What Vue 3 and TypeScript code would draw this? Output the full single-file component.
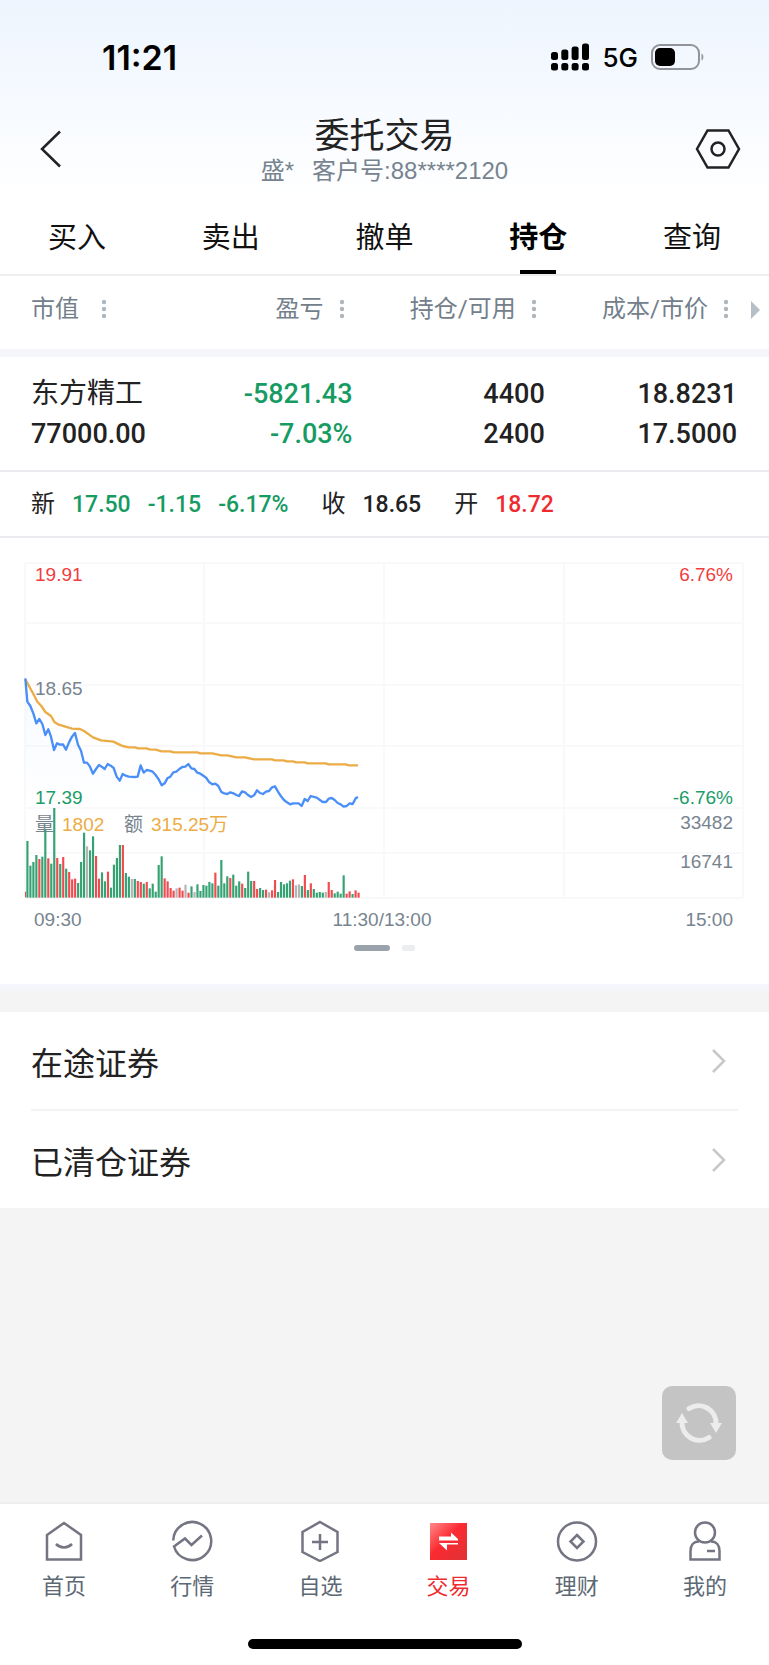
<script setup lang="ts">
interface Bar {
  x: number
  h: number
  kind: string
}

const tabs: string[] = ['买入', '卖出', '撤单', '持仓', '查询']
const activeTab = '持仓'
const columns: string[] = ['市值', '盈亏', '持仓/可用', '成本/市价']
const links: string[] = ['在途证券', '已清仓证券']

const priceLine =
  '76,385 82,455 91,468 100,490 109,520 118,507 127,522 136,555 145,538 153,560 162,600 171,580 180,584 189,583 198,599 207,577 216,560 225,549 234,584 243,602 252,638 261,638 270,650 279,671 288,657 297,645 305,650 314,657 323,642 332,647 341,654 350,680 359,692 368,672 377,677 386,680 404,681 413,680 422,646 431,668 440,660 449,662 458,665 467,675 476,688 485,706 494,700 502,685 511,680 520,667 529,665 538,657 547,651 556,650 565,642 574,655 583,657 592,668 601,671 610,677 619,684 628,697 637,703 646,701 655,708 664,726 673,730 682,732 691,727 700,730 709,735 717,738 726,724 735,727 744,735 753,741 762,736 771,721 780,729 789,732 798,725 807,723 816,712 825,709 834,725 843,739 852,750 861,757 870,763 879,760 896,760 905,768 914,747 923,753 932,738 950,743 968,756 978,756 986,746 995,744 1004,750 1013,759 1022,763 1031,770 1040,768 1049,760 1058,762 1067,745 1074,741'
const averageLine =
  '76,388 100,432 112,455 124,468 136,486 153,498 164,517 174,523 216,536 240,537 252,543 279,562 303,571 340,575 357,583 368,588 386,592 405,592 414,595 439,595 449,598 467,599 485,604 511,604 521,607 592,607 601,610 637,610 664,616 682,616 709,622 735,622 762,628 816,628 825,631 850,631 861,634 879,634 888,637 914,637 923,640 977,640 986,643 1037,643 1047,646 1074,646'

// One entry per minute: g = down, r = up, n = unchanged, then the bar height.
const volumes =
  'g169 g95 g106 g127 r115 g122 g202 r117 g101 g268 r118 g100 r121 g86 r76 r54 r56 g43 g106 g194 n153 g141 g183 r124 r56 g75 g48 r77 g29 g98 g118 g157 r157 g73 g62 n55 g55 r49 r46 g41 r46 g27 g41 g17 g97 g123 r57 r48 r28 r20 n27 r29 r20 n38 r14 g33 n16 g39 g19 g37 g35 g46 g42 r74 g35 g112 g42 g63 r58 g68 g35 g48 r41 g28 g77 g49 r49 r25 g28 g22 r23 n15 r21 r52 g16 g46 g39 g42 g50 r54 n36 n39 g34 r67 g22 r42 g25 g14 g16 g14 n16 r46 r22 g12 g17 g11 g66 r11 r18 g10 r21 r14'

const bars: Bar[] = volumes.split(' ').map((v, i) => ({
  x: 79 + i * 8.95,
  h: Number(v.slice(1)),
  kind: v[0],
}))
</script>

<template>
  <div class="page">
    <header class="top">
      <div class="status">
        <span class="clock">11:21</span>
        <div class="signals">
          <svg width="38" height="28" viewBox="0 0 38 28" aria-hidden="true">
            <g>
              <rect x="0" y="9" width="7" height="8" rx="2.500" />
              <rect x="10.300" y="6.500" width="7" height="10.500" rx="2.500" />
              <rect x="20.600" y="3.500" width="7" height="13.500" rx="2.500" />
              <rect x="31" y="0.500" width="7" height="16.500" rx="2.500" />
              <rect x="0" y="20" width="7" height="7.500" rx="2.500" />
              <rect x="10.300" y="20" width="7" height="7.500" rx="2.500" />
              <rect x="20.600" y="20" width="7" height="7.500" rx="2.500" />
              <rect x="31" y="20" width="7" height="7.500" rx="2.500" />
            </g>
          </svg>
          <span class="net">5G</span>
          <svg width="54" height="28" viewBox="0 0 54 28" aria-hidden="true">
            <rect x="1" y="2" width="47" height="24" rx="8" fill="none" stroke="#929499" stroke-width="2" />
            <rect x="4" y="5" width="20" height="18" rx="5" />
            <path d="M50.500 10.500c2.500 1 2.500 6 0 7z" fill="#929499" />
          </svg>
        </div>
      </div>
      <div class="nav">
        <button class="icon-button" aria-label="返回">
          <svg width="24" height="40" viewBox="0 0 24 40" fill="none" stroke="#222" stroke-width="2.500">
            <path d="M21 2.500 3 20l18 17.500" />
          </svg>
        </button>
        <div class="heading">
          <h1>委托交易</h1>
          <p><span>盛*</span><span>客户号:88****2120</span></p>
        </div>
        <button class="icon-button" aria-label="设置">
          <svg width="46" height="40" viewBox="0 0 46 40" fill="none" stroke="#222" stroke-width="2.500">
            <path d="M12.500 1.500h21L44 20 33.500 38.500h-21L2 20z" />
            <circle cx="23" cy="20" r="6.500" />
          </svg>
        </button>
      </div>
    </header>

    <nav class="tabs">
      <button v-for="tab in tabs" :key="tab" :class="{ active: tab === activeTab }">{{ tab }}</button>
    </nav>

    <div class="holdings">
      <table>
        <thead>
          <tr>
            <th v-for="column in columns" :key="column" scope="col">
              <button class="sort">
                {{ column }}
                <svg width="6" height="20" viewBox="0 0 6 20" fill="#aeb6be" aria-hidden="true">
                  <circle cx="3" cy="3" r="2.200" />
                  <circle cx="3" cy="10" r="2.200" />
                  <circle cx="3" cy="17" r="2.200" />
                </svg>
              </button>
            </th>
          </tr>
        </thead>
        <tbody>
          <tr>
            <td><span class="name">东方精工</span><br />77000.00</td>
            <td class="down">-5821.43<br />-7.03%</td>
            <td>4400<br />2400</td>
            <td>18.8231<br />17.5000</td>
          </tr>
        </tbody>
      </table>
      <svg class="more" width="9" height="20" viewBox="0 0 9 20" aria-hidden="true">
        <path d="M0 1v18l9-9z" fill="#b6bec6" />
      </svg>
    </div>

    <div class="quote">
      <span class="key">新</span>
      <span class="down">17.50</span>
      <span class="down">-1.15</span>
      <span class="down">-6.17%</span>
      <span class="key group">收</span>
      <span>18.65</span>
      <span class="key group">开</span>
      <span class="up">18.72</span>
    </div>

    <section class="chart">
      <svg class="plot" viewBox="0 0 769 383" role="img" aria-label="分时图">
        <defs>
          <linearGradient id="fade" x1="0" y1="0" x2="0" y2="1">
            <stop offset="0" stop-color="#4a8ff7" stop-opacity="0.05" />
            <stop offset="1" stop-color="#4a8ff7" stop-opacity="0" />
          </linearGradient>
        </defs>
        <g fill="none" stroke="#f9f9fc" stroke-width="2">
          <path d="M25 13H743M25 73H743M25 135H743M25 196H743M25 258H743M25 303H743M25 348H743" />
          <path d="M25 13V348M204 13V348M384 13V348M564 13V348M743 13V348" />
        </g>
        <svg x="0" y="0" width="769" height="383" viewBox="0 0 2307 1149">
          <polygon :points="`76,774 ${priceLine} 1074,774`" fill="url(#fade)" />
        </svg>
        <g class="label">
          <text x="35" y="31" class="up">19.91</text>
          <text x="35" y="145">18.65</text>
          <text x="35" y="254" class="down">17.39</text>
          <text x="733" y="31" class="up end">6.76%</text>
          <text x="733" y="254" class="down end">-6.76%</text>
          <text x="733" y="279" class="end">33482</text>
          <text x="733" y="318" class="end">16741</text>
          <text x="35" y="281">量</text>
          <text x="62" y="281" class="gold">1802</text>
          <text x="124" y="281">额</text>
          <text x="151" y="281" class="gold">315.25万</text>
          <text x="34" y="376">09:30</text>
          <text x="382" y="376" class="middle">11:30/13:00</text>
          <text x="733" y="376" class="end">15:00</text>
        </g>
        <svg x="0" y="0" width="769" height="383" viewBox="0 0 2307 1149">
          <rect x="75" y="1025" width="3" height="17" class="r" />
          <rect
            v-for="(bar, i) in bars"
            :key="i"
            :x="bar.x"
            :y="1042 - bar.h"
            width="6.500"
            :height="bar.h + 1"
            :class="bar.kind"
          />
          <g fill="none" stroke-width="7" stroke-linejoin="round">
            <polyline :points="averageLine" stroke="#ecac45" />
            <polyline :points="priceLine" stroke="#4a8ff7" />
          </g>
        </svg>
      </svg>
      <div class="pager"><i class="on"></i><i></i></div>
    </section>

    <ul class="links">
      <li v-for="link in links" :key="link">
        <a href="#">
          {{ link }}
          <svg width="16" height="26" viewBox="0 0 16 26" fill="none" stroke="#c8c8c8" stroke-width="2.500">
            <path d="M2 2l11 11L2 24" />
          </svg>
        </a>
      </li>
    </ul>

    <div class="rest">
      <button class="refresh" aria-label="刷新">
        <svg width="46" height="46" viewBox="0 0 46 46" aria-hidden="true">
          <g fill="none" stroke="#ececec" stroke-width="5" stroke-linecap="round">
            <path d="M13 8.500A17.500 17.500 0 0 1 40 24" />
            <path d="M33 37.500A17.500 17.500 0 0 1 6 22" />
          </g>
          <path d="M34 23h12l-6 10zM0 23h12L6 13z" fill="#ececec" />
        </svg>
      </button>
    </div>

    <footer class="bottom">
      <nav>
        <a href="#">
          <svg viewBox="0 0 42 42">
            <path d="M4 15 21 3l17 12v24.500H4z" />
            <path d="M13 24c4.500 4.500 11.500 4.500 16 0" />
          </svg>
          首页
        </a>
        <a href="#">
          <svg viewBox="0 0 42 42">
            <path d="M2.200 20.500A19 19 0 1 1 3 26.500l11-8 6.500 6.500L31 15.500" />
          </svg>
          行情
        </a>
        <a href="#">
          <svg viewBox="0 0 42 42">
            <path d="M21 2l17.500 10v20L21 41 3.500 32V12z" />
            <path d="M21 14v16M13 22h16" />
          </svg>
          自选
        </a>
        <a href="#" class="current">
          <svg viewBox="0 0 42 42">
            <defs>
              <linearGradient id="redTile" x1="0" y1="0" x2="1" y2="1">
                <stop offset="0" stop-color="#ff8a8a" />
                <stop offset="0.45" stop-color="#fb2a31" />
                <stop offset="1" stop-color="#dd3336" />
              </linearGradient>
            </defs>
            <rect x="2" y="3" width="37" height="37" fill="url(#redTile)" stroke="none" />
            <path d="M11 16.500h12v-4l7 6.500v1.500H11zM30 24.500H19v6l-8-7.500h19z" fill="#fff" stroke="none" />
          </svg>
          交易
        </a>
        <a href="#">
          <svg viewBox="0 0 42 42">
            <circle cx="21" cy="21.500" r="19" />
            <path d="M21 15l6.500 6.500L21 28l-6.500-6.500z" />
          </svg>
          理财
        </a>
        <a href="#">
          <svg viewBox="0 0 42 42">
            <circle cx="21" cy="12.500" r="10" />
            <path d="M15 21.500C9 21.500 6.500 26 6.500 31v8.500h29V31c0-5-2.500-9.500-8.500-9.500" />
            <path d="M23 31h8" />
          </svg>
          我的
        </a>
      </nav>
      <div class="home-bar"></div>
    </footer>
  </div>
</template>

<style>
body {
  margin: 0;
}
</style>

<style scoped>
.page {
  display: flex;
  flex-direction: column;
  min-height: 100vh;
  background: #fff;
  color: #222;
  font-family: Roboto, 'Noto Sans CJK SC', sans-serif;
}
button {
  padding: 0;
  border: 0;
  background: none;
  color: inherit;
  font: inherit;
}
a {
  color: inherit;
  text-decoration: none;
}
svg {
  display: block;
  flex: none;
}
.top {
  background: linear-gradient(#edf5fe, #f5f9ff 45%, #fff);
}
.status {
  display: flex;
  align-items: center;
  justify-content: space-between;
  height: 40px;
  padding: 37px 64px 27px 102px;
  color: #000;
  font-family: Inter, sans-serif;
}
.clock {
  font-size: 34px;
  font-weight: 600;
}
.signals {
  display: flex;
  align-items: center;
  gap: 13px;
}
.net {
  font-size: 26px;
  font-weight: 500;
}
.nav {
  display: flex;
  align-items: center;
  justify-content: space-between;
  height: 90px;
  padding: 0 28px 2px;
}
.icon-button {
  display: flex;
  justify-content: center;
  width: 46px;
}
.heading {
  padding-top: 6px;
  text-align: center;
}
h1 {
  margin: 0;
  font-size: 35px;
  font-weight: 400;
  line-height: 38px;
}
.heading p {
  display: flex;
  justify-content: center;
  gap: 18px;
  margin: 0;
  color: #77848f;
  font-family: 'Liberation Sans', 'Noto Sans CJK SC', sans-serif;
  font-size: 24px;
  line-height: 30px;
}
.tabs {
  display: grid;
  grid-template-columns: repeat(5, 1fr);
  border-bottom: 2px solid #eee;
}
.tabs button {
  display: flex;
  flex-direction: column;
  align-items: center;
  height: 78px;
  padding-top: 10px;
  color: #111;
  font-size: 29px;
  line-height: 64px;
}
.tabs .active {
  color: #000;
  font-weight: 700;
}
.tabs .active::after {
  width: 36px;
  height: 4px;
  background: #000;
  content: '';
}
.holdings {
  position: relative;
}
table {
  width: 100%;
  border-spacing: 0;
  table-layout: fixed;
}
th {
  padding: 15px 40px 22px 0;
  border-bottom: 8px solid #f5f6fb;
  color: #73808b;
  font-size: 24px;
  font-weight: 400;
  line-height: 36px;
  text-align: right;
  white-space: nowrap;
}
.sort {
  display: inline-flex;
  align-items: center;
  gap: 15px;
}
th:first-child .sort {
  gap: 22px;
}
td {
  padding: 17px 32px 16px 0;
  border-bottom: 2px solid #e9ebef;
  font-size: 27px;
  font-weight: 500;
  line-height: 40px;
  text-align: right;
  white-space: nowrap;
}
.name {
  font-size: 28px;
  font-weight: 400;
}
th:first-child,
td:first-child {
  padding-left: 31px;
  padding-right: 0;
  text-align: left;
}
.more {
  position: absolute;
  top: 24px;
  right: 9px;
}
.down {
  color: #169b62;
}
.up {
  color: #f02b2f;
}
.quote {
  display: flex;
  align-items: baseline;
  gap: 17px;
  height: 64px;
  padding: 0 31px;
  border-bottom: 2px solid #e9ebef;
  font-size: 23px;
  font-weight: 500;
  line-height: 64px;
}
.quote .key {
  font-size: 24px;
  font-weight: 400;
}
.quote .group {
  margin-left: 16px;
}
.chart {
  padding: 12px 0 33px;
}
.plot {
  width: 100%;
}
.label {
  fill: #77848f;
  font-family: 'Liberation Sans', 'Noto Sans CJK SC', sans-serif;
  font-size: 19px;
}
.label .up {
  fill: #f23d40;
}
.label .down {
  fill: #209c68;
}
.gold {
  fill: #ecac45;
}
.end {
  text-anchor: end;
}
.middle {
  text-anchor: middle;
}
.g {
  fill: #35a273;
}
.r {
  fill: #f04c50;
}
.n {
  fill: #b4b4b4;
}
.pager {
  display: flex;
  justify-content: center;
  gap: 12px;
  padding-top: 12px;
}
.pager i {
  width: 13px;
  height: 6px;
  border-radius: 2px;
  background: #ebedef;
}
.pager .on {
  width: 36px;
  border-radius: 3px;
  background: #9aa3ac;
}
.chart {
  border-bottom: 7px solid #f4f6fb;
}
.links {
  margin: 0;
  padding: 0;
  border-top: 21px solid #f4f4f4;
  list-style: none;
}
.links li {
  margin: 0 31px;
}
.links li + li {
  border-top: 2px solid #f3f3f3;
}
.links a {
  display: flex;
  align-items: center;
  justify-content: space-between;
  height: 97px;
  padding-right: 11px;
  font-size: 32px;
}
.rest {
  display: flex;
  flex: 1;
  align-items: flex-end;
  justify-content: flex-end;
  padding: 0 33px 42px;
  background: #f4f4f4;
}
.refresh {
  display: flex;
  align-items: center;
  justify-content: center;
  width: 74px;
  height: 74px;
  border-radius: 10px;
  background: #c4c4c4;
}
.bottom {
  border-top: 2px solid #eee;
}
.bottom nav {
  display: grid;
  grid-template-columns: repeat(6, 1fr);
}
.bottom a {
  display: flex;
  flex-direction: column;
  align-items: center;
  gap: 7px;
  padding-top: 16px;
  color: #5c6874;
  font-size: 22px;
  line-height: 36px;
}
.bottom a svg {
  width: 42px;
  height: 42px;
  fill: none;
  stroke: #747582;
  stroke-width: 2.5;
}
.bottom .current {
  color: #f02b2f;
}
.home-bar {
  width: 274px;
  height: 10px;
  margin: 34px auto 16px;
  border-radius: 5px;
  background: #000;
}
</style>
